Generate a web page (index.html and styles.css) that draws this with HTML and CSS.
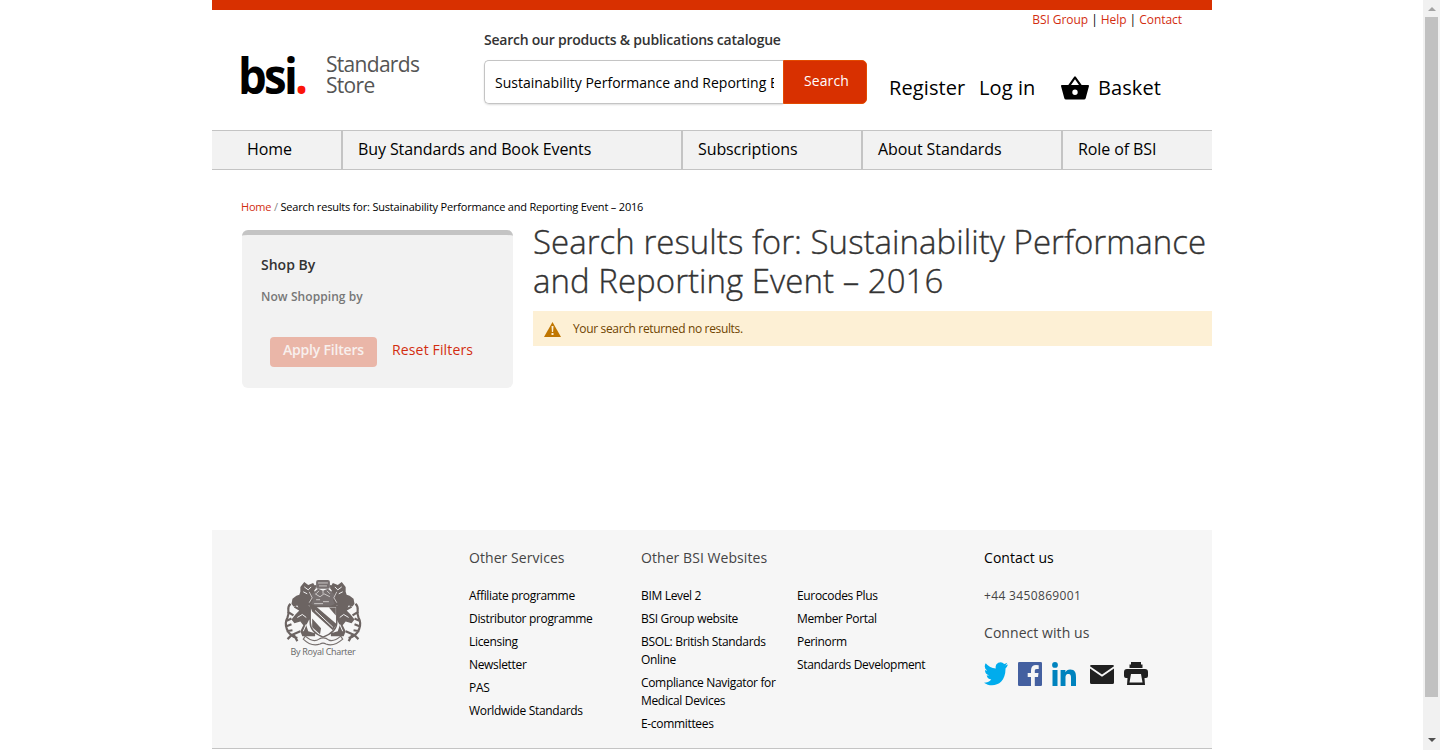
FILE: index.html
```html
<!DOCTYPE html>
<html lang="en">
<head>
<meta charset="utf-8">
<title>BSI Standards Store</title>
<link rel="stylesheet" href="styles.css">
</head>
<body>
<div class="viewport">
<div class="page">
  <header class="header">
    <div class="top-links"><a>BSI Group</a> | <a>Help</a> | <a>Contact</a></div>
    <div class="header-row">
      <a class="logo">
        <span class="logo-bsi">bsi<span class="logo-dot">.</span></span>
        <span class="logo-store">Standards<br>Store</span>
      </a>
      <form class="search">
        <label class="search-label">Search our products &amp; publications catalogue</label>
        <div class="search-box">
          <div class="search-input"><span>Sustainability Performance and Reporting Event – 2016</span></div>
          <div class="search-button">Search</div>
        </div>
      </form>
      <div class="account">
        <a class="register">Register</a><a class="login">Log in</a>
        <svg class="basket-icon" viewBox="0 0 28 24"><path fill-rule="evenodd" d="M.8 9h6.500L13.200.7q.8-1 1.600 0L20.700 9h6.500q1 0 .8 1l-3.300 12.200q-.4 1.300-1.700 1.300H5q-1.300 0-1.700-1.300L0 10Q-.2 9 .8 9zM10 9h8l-4-5.700zM14 13.500a2.700 2.700 0 1 0 0 5.400 2.700 2.700 0 0 0 0-5.400z"/></svg>
        <a class="basket">Basket</a>
      </div>
    </div>
  </header>
  <nav class="nav">
    <a class="nav-home">Home</a><a class="nav-buy">Buy Standards and Book Events</a><a class="nav-sub">Subscriptions</a><a class="nav-about">About Standards</a><a class="nav-role">Role of BSI</a>
  </nav>
  <div class="breadcrumb"><a>Home</a> <i>/</i> <span>Search results for: Sustainability Performance and Reporting Event – 2016</span></div>
  <div class="columns">
    <aside class="filters">
      <h2>Shop By</h2>
      <h3>Now Shopping by</h3>
      <div class="filter-actions"><span class="apply">Apply Filters</span><a class="reset">Reset Filters</a></div>
    </aside>
    <main class="results">
      <h1>Search results for: Sustainability Performance<br>and Reporting Event – 2016</h1>
      <div class="notice">
        <svg class="warning" viewBox="0 0 17 15"><path fill="#c07600" d="M8.500 0 17 15H0z"/><path fill="#fdf0d5" d="M7.500 4h2l-.4 6H7.900zM7.500 11h2v2h-2z"/></svg>
        <span>Your search returned no results.</span>
      </div>
    </main>
  </div>
  <footer class="footer">
    <div class="charter">
      <svg class="crest" viewBox="0 0 80 68">
        <defs>
          <g id="supporter">
            <path fill="#6c6462" d="M17 7l4-5 4 3 5-2 3 5-2 3 2 3-3 4 1 5 6 2-1 4-6-1-2 4 4 5 6 1 1 4-9 1-4-3-3 6 2 6 7 2v3H19l-2-5 3-6-3-4-6 2-3-4 4-5 4-4-2-5-4 1-2-3 1-5 4-3 3-1 1-3z"/>
            <path fill="none" stroke="#6c6462" stroke-width="2.200" d="M14 59C3 56 0 45 4 38 7 30 2 29 7 24M9 55l-5 5m4-15-5 2m6 4-6 1M4 32l6 4M2 42l6-3M17 52l-7 3 4 7M27 8l6-2M18 31l-7-4"/>
            <path fill="none" stroke="#f5f5f5" stroke-width="1" d="M21 7l4 3 3-3M24 14l-4-2M26 26l4 4M14 38l5-3 4 3M23 45l-3 7M29 36l4 1"/>
          </g>
        </defs>
        <use href="#supporter"/><use href="#supporter" transform="matrix(-1 0 0 1 80 0)"/>
        <g fill="#777070">
          <rect x="33" y="0" width="14" height="9" rx="2"/>
          <path d="M29 14l6-5 5 2 5-2 6 5 2 3-3 3 2 4-5 3H33l-5-3 2-4-3-3z"/>
        </g>
        <path fill="none" stroke="#d5d2d1" stroke-width=".9" d="M35 3h10M36 6h8M32 14l5 3 4-3 6 3M33 20h4m3 2h6M31 24h9M40 10v4M26 12l3 6-3 5M54 12l-3 6 3 5M36 11l-3 3M44 11l3 3"/>
        <path fill="#f7f7f7" stroke="#6c6462" stroke-width="1.500" d="M27 27h27v16q0 10-14 15-13-5-13-15z"/>
        <path fill="#6c6462" d="M27 27h6l21 18-4 6-21-19zM29 39l9 10-1 6-8-7zM46 28h7v8z"/>
        <path stroke="#f5f5f5" stroke-width="1" d="m32 31 18 17"/>
        <path fill="#f5f5f5" stroke="#77706e" stroke-width="1.200" d="M22 57q8 7 14 3 5-3 10 1 5 2 12-4l2 3q-9 8-17 5-3-2-6 0-9 3-17-5z"/>
      </svg>
      <span>By Royal Charter</span>
    </div>
    <section class="services">
      <h4>Other Services</h4>
      <ul><li>Affiliate programme</li><li>Distributor programme</li><li>Licensing</li><li>Newsletter</li><li>PAS</li><li>Worldwide Standards</li></ul>
    </section>
    <section class="websites">
      <h4>Other BSI Websites</h4>
      <div class="website-lists">
        <ul><li>BIM Level 2</li><li>BSI Group website</li><li>BSOL: British Standards<br>Online</li><li>Compliance Navigator for<br>Medical Devices</li><li>E-committees</li></ul>
        <ul><li>Eurocodes Plus</li><li>Member Portal</li><li>Perinorm</li><li>Standards Development</li></ul>
      </div>
    </section>
    <section class="contact">
      <h4 class="contact-title">Contact us</h4>
      <p>+44 3450869001</p>
      <h4 class="connect-title">Connect with us</h4>
      <div class="social">
        <svg viewBox="0 0 24 24"><path fill="#00aced" d="M24 2.600a10 10 0 0 1-2.800.8A5 5 0 0 0 23.300.7 10 10 0 0 1 20.200 1.900a4.900 4.900 0 0 0-8.400 4.500A14 14 0 0 1 1.700 1.300a5.500 5.500 0 0 0 1.500 7.200 5 5 0 0 1-2.200-.6v.1a5.300 5.300 0 0 0 3.900 5.200 5 5 0 0 1-2.200.1 4.900 4.900 0 0 0 4.600 4.200A10 10 0 0 1 0 20.800C8 26.500 21.800 23 21.500 6.500A10 10 0 0 0 24 2.600z"/></svg>
        <svg viewBox="0 0 24 24"><rect width="24" height="24" rx="1.300" fill="#4460a0"/><path fill="#f5f5f5" d="M13 24v-9H9.700v-4H13V8.200C13 4.800 15 3 18 3l2.700.2V7h-2c-1.500 0-1.900.8-1.900 1.900V11h3.700l-.5 4h-3.200v9z"/></svg>
        <svg viewBox="0 0 24 24"><path fill="#0083be" d="M.5 8h5v16h-5zM3 0a2.900 2.900 0 1 1 0 5.800A2.900 2.900 0 0 1 3 0zM8.600 8h4.800v2.200c.7-1.300 2.300-2.600 4.700-2.600 5 0 5.900 3.300 5.900 7.600V24h-5v-7.800c0-1.900 0-4.200-2.600-4.200s-2.900 2-2.900 4.100V24H8.600z"/></svg>
        <svg class="mail" viewBox="0 0 24 24"><path fill="#202020" d="M1.500 3h21Q24 3 24 4.200L12 12.500 0 4.200Q0 3 1.500 3zM0 6.500l12 8.300 12-8.300v14Q24 22 22.500 22h-21Q0 22 0 20.500z"/></svg>
        <svg class="printer" viewBox="0 0 24 24"><path fill="#202020" fill-rule="evenodd" d="M7 0h10v2.500h1.500V6h-13V2.500H7zM3 7h18q3 0 3 3v4q0 2-2 2h-1.500L21 23H3l.5-7H2q-2 0-2-2v-4q0-3 3-3zM7 12 5.500 20.500h13L17 12z"/></svg>
      </div>
    </section>
  </footer>
</div>
<div class="scrollbar"><i class="arrow-up"></i><div class="thumb"></div><i class="arrow-down"></i></div>
</div>
</body>
</html>
```
FILE: styles.css
```css
* { box-sizing: border-box; }
body { margin: 0; background: #fff; color: #000; font: 12px/18px "Open Sans", "Noto Sans", sans-serif; }
h1, h2, h3, h4, p, ul { margin: 0; padding: 0; font-weight: 400; }
ul { list-style: none; }
i { font-style: normal; }
a { white-space: nowrap; }
.viewport { display: flex; height: 750px; overflow: hidden; }
.page { width: 1000px; margin-left: 212px; margin-right: 211px; flex: none; }
.header { height: 130px; border-top: 10px solid #d83000; }
.top-links { height: 20px; line-height: 20px; padding-right: 30px; text-align: right; white-space: nowrap; letter-spacing: -.05px; }
.top-links a { color: #d22d10; }
.header-row { display: flex; height: 90px; }
.logo { display: flex; width: 272px; padding-left: 26px; }
.logo-bsi { width: 88px; font: 700 50px/90px "Open Sans", sans-serif; letter-spacing: -3px; transform: scaleX(.91); transform-origin: 0 0; }
.logo-dot { color: #fb1409; }
.logo-store { padding-top: 24px; font-size: 21px; line-height: 21px; letter-spacing: -.7px; color: #555; }
.search { width: 383px; }
.search-label { display: block; height: 30px; line-height: 20px; font-size: 14px; font-weight: 600; letter-spacing: -.23px; color: #333; white-space: nowrap; }
.search-box { display: flex; height: 44px; }
.search-input { width: 299px; padding: 0 9px 0 10px; border: 1px solid #c4c4c4; border-right: 0; border-radius: 5px 0 0 5px; font-size: 14px; line-height: 44px; box-shadow: 0 1px 2px #ddd; }
.search-input span { display: block; overflow: hidden; white-space: nowrap; }
.search-button { width: 84px; padding-left: 20px; border: 1px solid #e34a00; border-radius: 0 5px 5px 0; background: #d83000; color: #fff; font-size: 14px; line-height: 40px; letter-spacing: .1px; }
.account { display: flex; padding: 43px 0 0 22px; font-size: 20px; line-height: 30px; letter-spacing: .1px; }
.register { width: 90px; }
.login { width: 82px; }
.basket-icon { width: 28px; height: 24px; margin: 3px 9px 0 0; }
.nav { display: flex; height: 40px; border: solid #c4c4c4; border-width: 1px 0; background: #f2f2f2; font-size: 16px; line-height: 37px; letter-spacing: -.1px; }
.nav a { padding-left: 15px; border-left: 2px solid #c4c4c4; }
.nav .nav-home { width: 129px; padding-left: 35px; border: 0; }
.nav-buy { width: 340px; }
.nav-sub { width: 180px; }
.nav-about { width: 200px; }
.nav-role { width: 151px; }
.breadcrumb { padding: 28px 0 14px 29px; font-size: 11px; white-space: nowrap; letter-spacing: -.19px; }
.breadcrumb a { color: #d22d10; }
.breadcrumb i { color: #888; }
.columns { display: flex; gap: 20px; height: 300px; padding-left: 30px; }
.filters { width: 271px; height: 158px; padding: 20px 19px; border-top: 5px solid #c4c4c4; border-radius: 6px; background: #f2f2f2; }
.filters h2 { font-size: 14px; line-height: 20px; font-weight: 600; color: #333; }
.filters h3 { padding-top: 12px; font-size: 12px; line-height: 20px; font-weight: 600; letter-spacing: .07px; color: #777; }
.filter-actions { display: flex; gap: 15px; padding: 30px 0 0 9px; font-size: 14px; line-height: 26px; }
.apply { width: 107px; height: 30px; padding-left: 13px; border-radius: 4px; background: #eab6a8; color: #f8f0ee; font-weight: 600; letter-spacing: -.2px; white-space: nowrap; }
.reset { color: #d22d10; letter-spacing: .15px; }
.results { width: 679px; }
.results h1 { height: 81px; margin: -8px 0 8px; font-size: 33px; line-height: 39px; font-weight: 300; letter-spacing: .03px; color: #333; -webkit-text-stroke: .35px #333; white-space: nowrap; }
.notice { display: flex; height: 35px; padding-left: 11px; background: #fdf0d5; color: #6f4400; line-height: 35px; letter-spacing: -.35px; }
.warning { width: 17px; height: 15px; margin: 11px 12px 0 0; }
.footer { display: flex; height: 219px; border-bottom: 1px solid #c4c4c4; background: #f6f6f6; }
.footer h4 { height: 54px; padding-top: 18px; font-size: 14px; line-height: 20px; letter-spacing: .06px; color: #444; white-space: nowrap; }
.footer li { padding: 3px 0 2px; white-space: nowrap; letter-spacing: -.33px; }
.charter { width: 257px; padding: 50px 0 0 71px; color: #666; font-size: 9px; line-height: 9px; letter-spacing: -.3px; }
.charter span { display: block; width: 80px; text-align: center; white-space: nowrap; }
.crest { display: block; width: 80px; height: 67px; }
.services { width: 172px; }
.websites { width: 343px; }
.website-lists { display: flex; }
.website-lists ul:first-child { width: 156px; }
.contact p { padding-top: 3px; color: #444; letter-spacing: .35px; }
.footer .contact-title { color: #000; }
.footer .connect-title { height: 57px; padding-top: 18px; }
.social { display: flex; gap: 10px; }
.social svg { width: 24px; height: 24px; }
.social .mail { margin-left: 4px; }
.scrollbar { width: 17px; height: 750px; padding: 7px 2px; display: flex; flex-direction: column; flex: none; background: #f1f1f1; }
.arrow-up, .arrow-down { width: 0; height: 0; margin-left: 3px; border: solid transparent; border-width: 0 4px 4px; border-bottom-color: #a3a3a3; }
.thumb { height: 680px; margin: 6px 0 41px; background: #c1c1c1; width: 13px; }
.arrow-down { border-width: 4px 4px 0; border-top-color: #505050; }
```
